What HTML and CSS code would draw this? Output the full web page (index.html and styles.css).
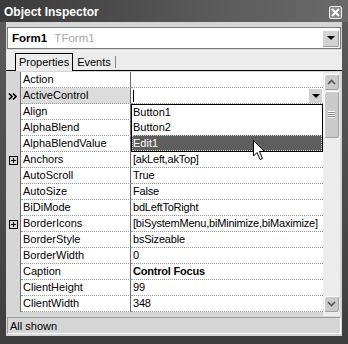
FILE: index.html
```html
<!DOCTYPE html>
<html lang="en">
<head>
  <meta charset="UTF-8" />
  <title>Object Inspector</title>
  <link rel="stylesheet" href="styles.css">
</head>
<body>
  <div class="window">
    <!-- Title bar -->
    <div class="titlebar">
      <span class="title">Object Inspector</span>
      <span class="close-btn">
        <svg width="9" height="9" viewBox="0 0 9 9"><path d="M1 1 L8 8 M8 1 L1 8" stroke="#fff" stroke-width="2"/></svg>
      </span>
    </div>

    <div class="client">
      <!-- Component selector -->
      <div class="combo">
        <span class="combo-text"><b>Form1</b> <span class="type">TForm1</span></span>
        <span class="drop-btn"><span class="tri"></span></span>
      </div>

      <!-- Tabs -->
      <div class="tabs">
        <span class="tab active">Properties</span>
        <span class="tab">Events</span>
      </div>

      <!-- Property grid -->
      <div class="grid">
        <div class="rows">
          <div class="row"><span class="gutter"></span><span class="name">Action</span><span class="value"></span></div>
          <div class="row current">
            <span class="gutter">
              <svg width="10" height="7" viewBox="0 0 10 7"><path d="M1 0.5 L4 3.5 L1 6.5 M5 0.5 L8 3.5 L5 6.5" fill="none" stroke="#000" stroke-width="1.6"/></svg>
            </span>
            <span class="name">ActiveControl</span>
            <span class="value editing"><span class="caret"></span><span class="cell-btn"><span class="tri"></span></span></span>
          </div>
          <div class="row"><span class="gutter"></span><span class="name">Align</span><span class="value"></span></div>
          <div class="row"><span class="gutter"></span><span class="name">AlphaBlend</span><span class="value"></span></div>
          <div class="row"><span class="gutter"></span><span class="name">AlphaBlendValue</span><span class="value"></span></div>
          <div class="row"><span class="gutter"><span class="plus"></span></span><span class="name">Anchors</span><span class="value">[akLeft,akTop]</span></div>
          <div class="row"><span class="gutter"></span><span class="name">AutoScroll</span><span class="value">True</span></div>
          <div class="row"><span class="gutter"></span><span class="name">AutoSize</span><span class="value">False</span></div>
          <div class="row"><span class="gutter"></span><span class="name">BiDiMode</span><span class="value">bdLeftToRight</span></div>
          <div class="row"><span class="gutter"><span class="plus"></span></span><span class="name">BorderIcons</span><span class="value">[biSystemMenu,biMinimize,biMaximize]</span></div>
          <div class="row"><span class="gutter"></span><span class="name">BorderStyle</span><span class="value">bsSizeable</span></div>
          <div class="row"><span class="gutter"></span><span class="name">BorderWidth</span><span class="value">0</span></div>
          <div class="row"><span class="gutter"></span><span class="name">Caption</span><span class="value"><b>Control Focus</b></span></div>
          <div class="row"><span class="gutter"></span><span class="name">ClientHeight</span><span class="value">99</span></div>
          <div class="row"><span class="gutter"></span><span class="name">ClientWidth</span><span class="value">348</span></div>

          <!-- Open dropdown list -->
          <ul class="drop-list">
            <li>Button1</li>
            <li>Button2</li>
            <li class="selected">Edit1</li>
          </ul>

          <svg class="pointer" width="13" height="21" viewBox="0 0 13 21">
            <path d="M0.5 0.5 L0.5 16 L4 12.5 L7 19.5 L9.5 18.5 L6.5 11.5 L11.5 11.5 Z" fill="#fff" stroke="#000" stroke-width="1"/>
          </svg>
        </div>

        <div class="vscroll">
          <span class="sb-btn"><svg width="9" height="6" viewBox="0 0 9 6"><path d="M1 5 L4.5 1.5 L8 5" fill="none" stroke="#555" stroke-width="1.6"/></svg></span>
          <span class="sb-thumb"><span class="grip"></span></span>
          <span class="sb-track"></span>
          <span class="sb-btn"><svg width="9" height="6" viewBox="0 0 9 6"><path d="M1 1 L4.5 4.5 L8 1" fill="none" stroke="#555" stroke-width="1.6"/></svg></span>
        </div>
      </div>

      <!-- Status bar -->
      <div class="status">All shown</div>
    </div>
  </div>
</body>
</html>
```

FILE: styles.css
```css
/* General */
body {
  margin: 0;
  padding: 0;
  background-color: #4a4a4a;
  font-family: "Liberation Sans", Arial, sans-serif;
  font-size: 11px;
  color: #000;
}

.window {
  width: 348px;
  height: 344px;
  box-sizing: border-box;
  background: linear-gradient(to bottom, #5c5c5c, #3e3e3e);
  padding: 0 6px 8px 6px;
  display: flex;
  flex-direction: column;
}

/* Title bar */
.titlebar {
  height: 22px;
  margin: 0 -6px;
  padding: 0 6px 0 4px;
  display: flex;
  align-items: center;
  justify-content: space-between;
  background: linear-gradient(to right, #3a3a3a, #5a5a5a 60%, #6a6a6a);
}

.title {
  color: #fff;
  font-weight: bold;
  font-size: 12px;
  margin-top: 2px;
}

.close-btn {
  width: 11px;
  height: 11px;
  border: 1px solid #f0f0f0;
  border-radius: 2px;
  background-color: #8c8c8c;
  display: flex;
  align-items: center;
  justify-content: center;
  margin-top: 3px;
}

/* Client area */
.client {
  flex: 1;
  background-color: #d6d6d6;
  display: flex;
  flex-direction: column;
}

.combo {
  margin: 5px 1px 0 1px;
  height: 22px;
  box-sizing: border-box;
  border: 1px solid #7a7a7a;
  background-color: #fff;
  display: flex;
  align-items: center;
  justify-content: space-between;
  padding: 0 1px 0 4px;
  font-size: 11.5px;
}

.combo .type {
  color: #a8a8a8;
  margin-left: 4px;
}

.drop-btn {
  width: 17px;
  height: 17px;
  box-sizing: border-box;
  border: 1px solid #fff;
  border-right-color: #9a9a9a;
  border-bottom-color: #9a9a9a;
  border-radius: 2px;
  background-color: #d2d2d2;
  display: flex;
  align-items: center;
  justify-content: center;
}

.tri {
  width: 0;
  height: 0;
  border-left: 4px solid transparent;
  border-right: 4px solid transparent;
  border-top: 4px solid #000;
}

/* Tabs */
.tabs {
  height: 21px;
  margin-top: 1px;
  box-sizing: border-box;
  border-top: 1px solid #f4f4f4;
  border-bottom: 1px solid #000;
  background-color: #ececec;
  display: flex;
  align-items: flex-end;
  padding-left: 9px;
}

.tab {
  height: 17px;
  line-height: 16px;
  padding: 0 3px;
  font-size: 11px;
  box-sizing: border-box;
  position: relative;
}

.tab.active {
  border: 1px solid #000;
  border-bottom: none;
  background-color: #ececec;
  margin-bottom: -1px;
  height: 18px;
}

.tab + .tab {
  border-right: 1px solid #888;
  height: 12px;
  line-height: 12px;
  margin-bottom: 2px;
  padding: 0 4px;
}

/* Property grid */
.grid {
  height: 245px;
  display: flex;
  padding-top: 1px;
  box-sizing: border-box;
}

.rows {
  flex: 1;
  position: relative;
  overflow: hidden;
}

.row {
  display: grid;
  grid-template-columns: 15px 110px 1fr;
  height: 16px;
}

.gutter {
  background-color: #d6d6d6;
  border-right: 1px solid #6a6a6a;
  display: flex;
  align-items: center;
  justify-content: center;
}

.name,
.value {
  background-color: #fff;
  border-bottom: 1px dotted #9a9a9a;
  padding-left: 2px;
  line-height: 15px;
  white-space: nowrap;
  overflow: hidden;
  font-size: 11px;
}

.value {
  letter-spacing: -0.2px;
}

.name {
  border-right: 1px solid #6a6a6a;
}

.row.current .name {
  background-color: #dcdcdc;
}

.value.editing {
  display: flex;
  align-items: center;
  justify-content: space-between;
  padding-right: 1px;
}

.caret {
  width: 1px;
  height: 12px;
  background-color: #000;
}

.cell-btn {
  width: 13px;
  height: 14px;
  background-color: #d2d2d2;
  display: flex;
  align-items: center;
  justify-content: center;
}

.plus {
  width: 7px;
  height: 7px;
  border: 1px solid #000;
  background:
    linear-gradient(#000, #000) center / 5px 1px no-repeat,
    linear-gradient(#000, #000) center / 1px 5px no-repeat;
}

/* Dropdown list over the grid */
.drop-list {
  position: absolute;
  left: 125px;
  right: 0;
  top: 32px;
  margin: 0;
  padding: 0;
  list-style: none;
  background-color: #fff;
  border: 1px solid #000;
  font-size: 11px;
}

.drop-list li {
  height: 15px;
  line-height: 15px;
  padding-left: 1px;
}

.drop-list li.selected {
  height: 16px;
  box-sizing: border-box;
  background-color: #5e5e5e;
  color: #fff;
  border: 1px dotted #d0d0d0;
  line-height: 14px;
  padding-left: 0;
}

.pointer {
  position: absolute;
  left: 247px;
  top: 68px;
}

/* Scrollbar */
.vscroll {
  width: 17px;
  background-color: #ececec;
  display: flex;
  flex-direction: column;
  padding: 2px 0 4px 0;
  box-sizing: border-box;
  margin-right: 2px;
}

.sb-btn,
.sb-thumb {
  margin: 0 1px;
  border: 1px solid #fff;
  border-right-color: #a0a0a0;
  border-bottom-color: #a0a0a0;
  border-radius: 3px;
  background-color: #cacaca;
  display: flex;
  align-items: center;
  justify-content: center;
}

.sb-btn {
  height: 14px;
}

.sb-thumb {
  height: 45px;
  margin-top: 1px;
}

.grip {
  width: 7px;
  height: 7px;
  background: repeating-linear-gradient(to bottom, #fff 0 1px, #8a8a8a 1px 2px);
}

.sb-track {
  flex: 1;
}

/* Status bar */
.status {
  margin: 1px 1px 0 1px;
  height: 17px;
  line-height: 16px;
  box-sizing: border-box;
  border: 1px solid #9a9a9a;
  border-right-color: #fff;
  border-bottom-color: #fff;
  padding-left: 2px;
  font-size: 11px;
}
```
